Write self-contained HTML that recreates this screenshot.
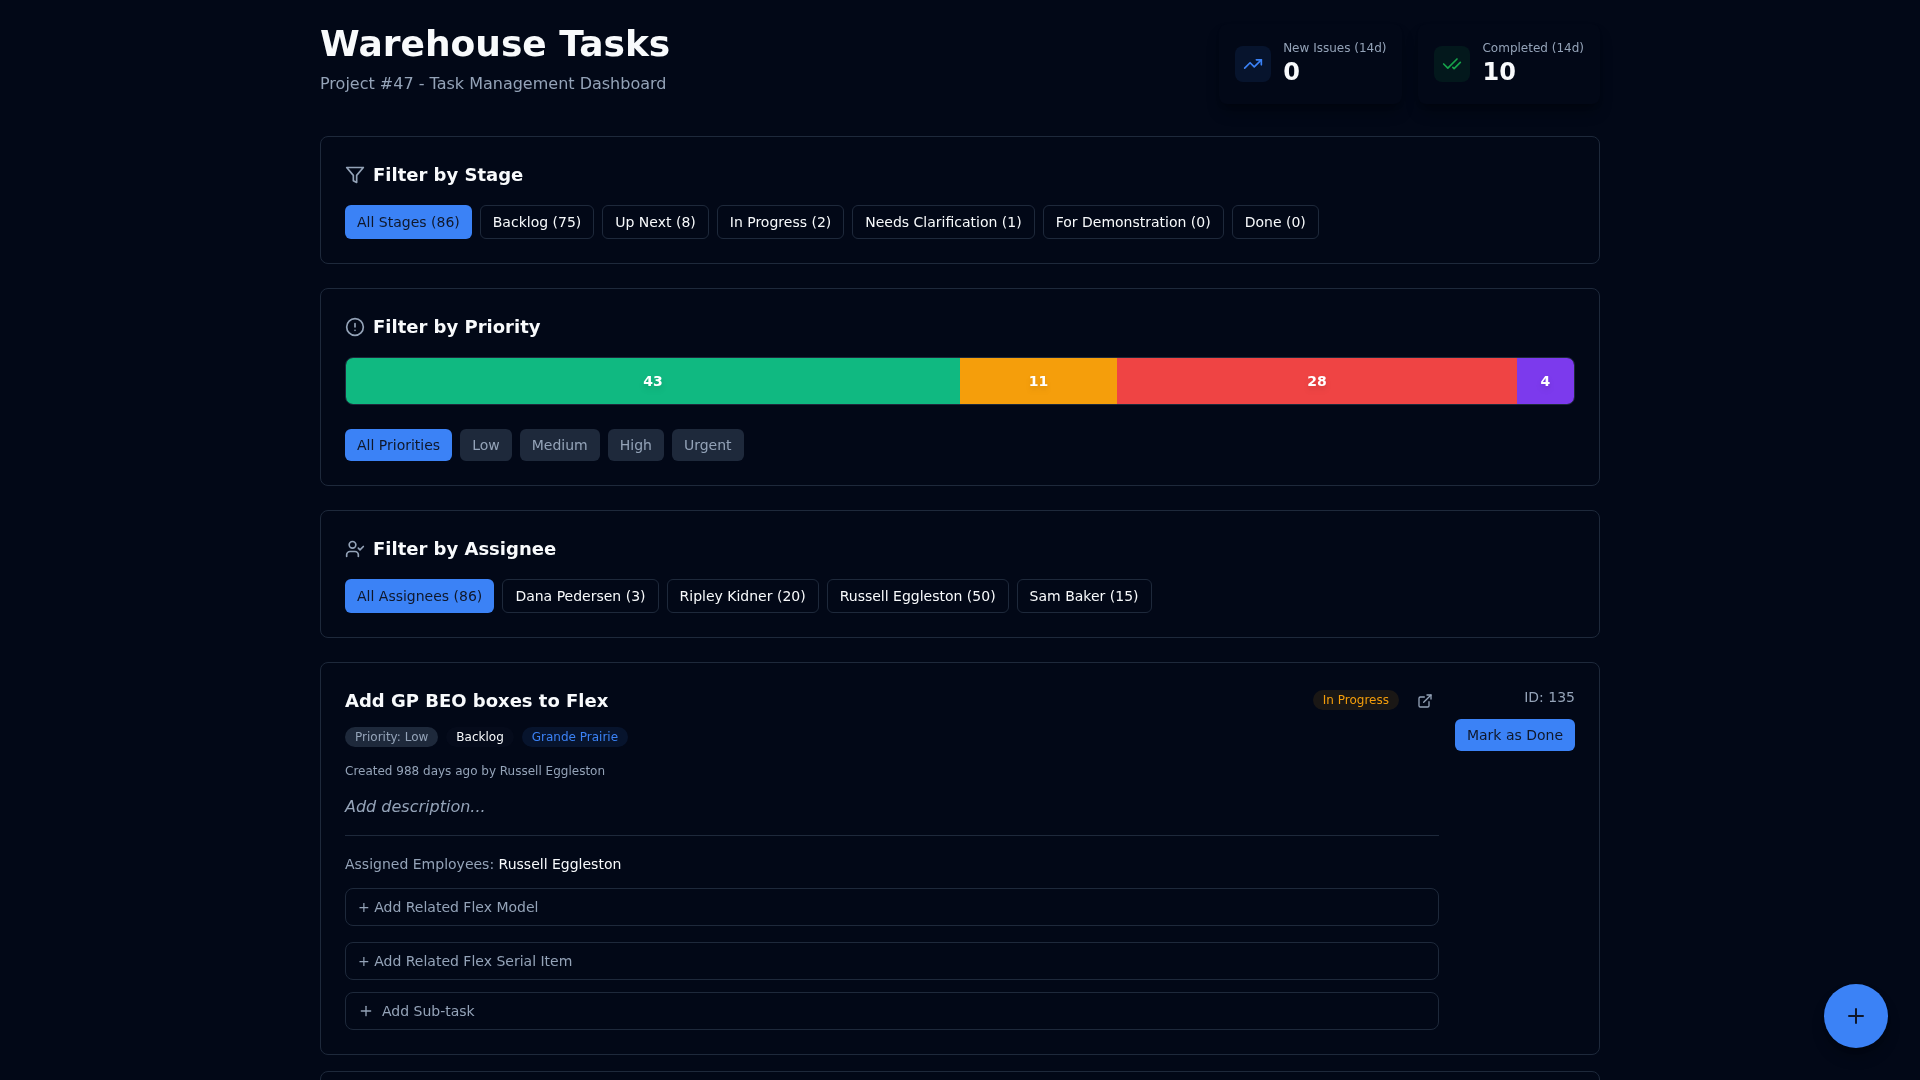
<!DOCTYPE html>
<html lang="en">
<head>
<meta charset="utf-8">
<title>Warehouse Tasks</title>
<style>
*{box-sizing:border-box;margin:0;padding:0}
html,body{width:1920px;height:1080px;overflow:hidden;background:#020817;color:#f8fafc;
  font-family:"DejaVu Sans","Liberation Sans",sans-serif;}
body{position:relative;will-change:transform}
svg{display:block;fill:none;stroke:currentColor;stroke-width:2;stroke-linecap:round;stroke-linejoin:round}
.wrap{width:1280px;margin:0 auto;padding-top:24px}
.header{display:flex;justify-content:space-between;align-items:flex-start;margin-bottom:32px;height:80px}
h1{font-size:36px;line-height:40px;font-weight:700;color:#f8fafc}
.sub{font-size:16px;line-height:24px;color:#94a3b8;margin-top:8px}
.stats{display:flex;gap:16px}
.stat{display:flex;align-items:center;gap:12px;padding:16px;height:80px;border-radius:8px;background:#020817;
  box-shadow:0 10px 15px -3px rgba(0,0,0,.3),0 4px 6px -4px rgba(0,0,0,.3)}
.ibox{width:36px;height:36px;border-radius:8px;display:flex;align-items:center;justify-content:center}
.ibox.b{background:rgba(59,130,246,.1);color:#3b82f6}
.ibox.g{background:rgba(22,163,74,.1);color:#16a34a}
.stat .l{font-size:12px;line-height:16px;color:#94a3b8}
.stat .v{font-size:24px;line-height:32px;font-weight:700;color:#f8fafc}
.card{border:1px solid #1e293b;border-radius:8px;padding:24px;margin-bottom:24px;background:#020817}
.ct{display:flex;align-items:center;gap:8px;font-size:18px;line-height:28px;font-weight:700;color:#f8fafc;margin-bottom:16px}
.ct svg{color:#94a3b8}
.row{display:flex;gap:8px}
.btn{height:34px;padding:0 12px;border:1px solid #1e293b;border-radius:6px;font-size:14px;line-height:32px;color:#f8fafc;white-space:nowrap}
.btn.on{background:#3b82f6;border:0;padding:0 12px;line-height:34px;color:#0f172a}
.pb{height:32px;padding:0 12px;border-radius:6px;font-size:14px;line-height:32px;background:#1e293b;color:#94a3b8;white-space:nowrap}
.pb.on{background:#3b82f6;color:#0f172a}
.bar{display:flex;height:48px;border-radius:8px;overflow:hidden;margin-bottom:24px;border:1px solid #1e293b}
.bar div{display:flex;align-items:center;justify-content:center;font-size:14px;font-weight:700;color:#fff}
.bar span{filter:drop-shadow(0 4px 3px rgba(0,0,0,.07)) drop-shadow(0 2px 2px rgba(0,0,0,.06))}
.task{display:flex;gap:16px}
.main{flex:1;min-width:0}
.side{width:120px;text-align:right}
.fab{position:absolute;left:1824px;top:984px;width:64px;height:64px;border-radius:50%;background:#3b82f6;color:#0f172a;
  display:flex;align-items:center;justify-content:center;box-shadow:0 10px 15px -3px rgba(0,0,0,.3),0 4px 6px -4px rgba(0,0,0,.3)}

h3{font-size:18px;line-height:28px;font-weight:700;color:#f8fafc}
.trow{display:flex;justify-content:space-between;align-items:center;height:28px}
.tr{display:flex;align-items:center}
.badge{display:inline-block;height:20px;line-height:20px;font-size:12px;padding:0 10px;border-radius:10px;white-space:nowrap}
.badge.amber{background:rgba(245,158,11,.1);color:#f59e0b;position:relative;top:-1px;left:1px}
.badge.sec{background:#1e293b;color:#94a3b8}
.badge.dark{background:#050b1b;color:#f8fafc}
.badge.blue{background:rgba(59,130,246,.1);color:#3b82f6}
.ext{color:#94a3b8;margin-left:19px;margin-right:6px}
.badges{display:flex;gap:8px;margin-top:12px;height:20px}
.created{font-size:12px;line-height:16px;color:#94a3b8;margin-top:16px}
.desc{font-size:16px;line-height:24px;color:#94a3b8;font-style:italic;margin-top:16px}
.hr{height:1px;background:#1e293b;margin-top:16px}
.assn{font-size:14px;line-height:20px;color:#f8fafc;margin-top:18px}
.assn span{color:#94a3b8}
.addbox{height:38px;border:1px solid #1e293b;border-radius:8px;margin-top:14px;padding:0 12px;font-size:14px;line-height:36px;color:#94a3b8}
.addbox.sub{display:flex;align-items:center;gap:8px}
.id{font-size:14px;line-height:20px;color:#94a3b8}
.done{margin-top:12px;height:32px;line-height:32px;border-radius:6px;background:#3b82f6;color:#0f172a;font-size:14px;text-align:center}
</style>
</head>
<body>
<div class="wrap">
  <div class="header">
    <div>
      <h1>Warehouse Tasks</h1>
      <p class="sub">Project #47 - Task Management Dashboard</p>
    </div>
    <div class="stats">
      <div class="stat">
        <div class="ibox b"><svg width="20" height="20" viewBox="0 0 24 24"><polyline points="22 7 13.5 15.5 8.5 10.5 2 17"/><polyline points="16 7 22 7 22 13"/></svg></div>
        <div><div class="l">New Issues (14d)</div><div class="v">0</div></div>
      </div>
      <div class="stat">
        <div class="ibox g"><svg width="20" height="20" viewBox="0 0 24 24"><path d="M18 6 7 17l-5-5"/><path d="m22 10-7.5 7.5L13 16"/></svg></div>
        <div><div class="l">Completed (14d)</div><div class="v">10</div></div>
      </div>
    </div>
  </div>

  <div class="card">
    <div class="ct"><svg width="20" height="20" viewBox="0 0 24 24"><polygon points="22 3 2 3 10 12.46 10 19 14 21 14 12.46 22 3"/></svg><span>Filter by Stage</span></div>
    <div class="row">
      <div class="btn on">All Stages (86)</div>
      <div class="btn">Backlog (75)</div>
      <div class="btn">Up Next (8)</div>
      <div class="btn">In Progress (2)</div>
      <div class="btn">Needs Clarification (1)</div>
      <div class="btn">For Demonstration (0)</div>
      <div class="btn">Done (0)</div>
    </div>
  </div>

  <div class="card">
    <div class="ct"><svg width="20" height="20" viewBox="0 0 24 24"><circle cx="12" cy="12" r="10"/><line x1="12" y1="8" x2="12" y2="12"/><line x1="12" y1="16" x2="12.01" y2="16"/></svg><span>Filter by Priority</span></div>
    <div class="bar">
      <div style="width:50%;background:#10b981"><span>43</span></div>
      <div style="width:12.79%;background:#f59e0b"><span>11</span></div>
      <div style="width:32.56%;background:#ef4444"><span>28</span></div>
      <div style="width:4.65%;background:#7c3aed"><span>4</span></div>
    </div>
    <div class="row">
      <div class="pb on">All Priorities</div>
      <div class="pb">Low</div>
      <div class="pb">Medium</div>
      <div class="pb">High</div>
      <div class="pb">Urgent</div>
    </div>
  </div>

  <div class="card">
    <div class="ct"><svg width="20" height="20" viewBox="0 0 24 24"><path d="M16 21v-2a4 4 0 0 0-4-4H6a4 4 0 0 0-4 4v2"/><circle cx="9" cy="7" r="4"/><polyline points="16 11 18 13 22 9"/></svg><span>Filter by Assignee</span></div>
    <div class="row">
      <div class="btn on">All Assignees (86)</div>
      <div class="btn" style="margin-left:.05px">Dana Pedersen (3)</div>
      <div class="btn">Ripley Kidner (20)</div>
      <div class="btn">Russell Eggleston (50)</div>
      <div class="btn">Sam Baker (15)</div>
    </div>
  </div>

  <div class="card" id="task1" style="margin-bottom:16px">
    <div class="task">
      <div class="main">
        <div class="trow">
          <h3>Add GP BEO boxes to Flex</h3>
          <div class="tr">
            <span class="badge amber">In Progress</span>
            <span class="ext"><svg width="16" height="16" viewBox="0 0 24 24"><path d="M15 3h6v6"/><path d="M10 14 21 3"/><path d="M18 13v6a2 2 0 0 1-2 2H5a2 2 0 0 1-2-2V8a2 2 0 0 1 2-2h6"/></svg></span>
          </div>
        </div>
        <div class="badges">
          <span class="badge sec">Priority: Low</span>
          <span class="badge dark">Backlog</span>
          <span class="badge blue">Grande Prairie</span>
        </div>
        <p class="created">Created 988 days ago by Russell Eggleston</p>
        <p class="desc">Add description...</p>
        <div class="hr"></div>
        <p class="assn"><span>Assigned Employees:</span> Russell Eggleston</p>
        <div class="addbox">+ Add Related Flex Model</div>
        <div class="addbox" style="margin-top:16px">+ Add Related Flex Serial Item</div>
        <div class="addbox sub" style="margin-top:12px"><svg width="16" height="16" viewBox="0 0 24 24"><path d="M5 12h14"/><path d="M12 5v14"/></svg><span>Add Sub-task</span></div>
      </div>
      <div class="side">
        <div class="id">ID: 135</div>
        <div class="done">Mark as Done</div>
      </div>
    </div>
  </div>
  <div class="card" style="height:200px"></div>
</div>
<div class="fab"><svg width="24" height="24" viewBox="0 0 24 24"><path d="M5 12h14"/><path d="M12 5v14"/></svg></div>
</body>
</html>
